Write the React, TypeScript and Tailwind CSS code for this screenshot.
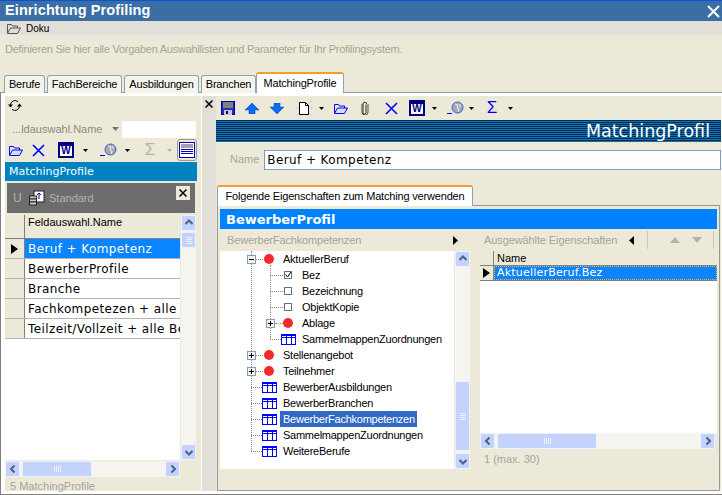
import type { ReactNode } from 'react';

const BLUE = '#0000ff';

function Caret({ className = '', gray = false }: { className?: string; gray?: boolean }) {
  return (
    <svg width="5" height="3" viewBox="0 0 5 3" className={`shrink-0 ${className}`}>
      <path d="M0 0h5L2.5 3z" fill={gray ? '#b5b3a6' : '#000'} />
    </svg>
  );
}

function FolderIcon({ className = '', color = BLUE, fill = '#cfe0ff' }: { className?: string; color?: string; fill?: string }) {
  return (
    <svg width="14" height="11" viewBox="0 0 14 11" className={`shrink-0 ${className}`}>
      <path d="M.5 10V1.5h4l1 1.5h5v2" fill="none" stroke={color} />
      <path d="M.5 10.5l3-5.5h10l-3 5.5z" fill={fill} stroke={color} />
    </svg>
  );
}

function SaveIcon({ className = '' }: { className?: string }) {
  return (
    <svg width="14" height="14" viewBox="0 0 14 14" className={`shrink-0 ${className}`}>
      <rect x="0.5" y="0.5" width="13" height="13" fill="#2a2ac8" stroke="#00009c" />
      <rect x="2" y="1" width="10" height="6" fill="#808080" />
      <rect x="3" y="9" width="8" height="5" fill="#c8c8c8" />
      <rect x="5" y="10" width="2" height="3" fill="#00009c" />
    </svg>
  );
}

function ArrowIcon({ down = false, className = '' }: { down?: boolean; className?: string }) {
  return (
    <svg width="14" height="11" viewBox="0 0 14 11" className={`shrink-0 ${className}`}>
      <path d={down ? 'M4 0h6v4h4L7 11 0 4h4z' : 'M7 0l7 7h-4v4H4V7H0z'} fill="#0a6cf0" stroke="#0040c0" strokeWidth="0.5" />
    </svg>
  );
}

function NewIcon({ className = '' }: { className?: string }) {
  return (
    <svg width="16" height="16" viewBox="0 0 16 16" className={`shrink-0 ${className}`}>
      <path d="M1 1l3 3M15 1l-3 3M1 15l3-3M15 15l-3-3M0 8h2M14 8h2" stroke="#b8c8f0" strokeWidth="1" />
      <path d="M3.5 2.5h6l3 3v9h-9z" fill="#fff" stroke="#000" />
      <path d="M9.5 2.5v3h3" fill="none" stroke="#000" />
    </svg>
  );
}

function ClipIcon({ className = '' }: { className?: string }) {
  return (
    <svg width="8" height="14" viewBox="0 0 8 14" className={`shrink-0 ${className}`}>
      <path d="M5.5 3v8a1.5 1.5 0 0 1-3 0V2.5a1.8 1.8 0 0 1 3.6 0" fill="none" stroke="#303030" transform="translate(-.5 .5)" />
      <path d="M1 3v8a3 3 0 0 0 6 0V3" fill="none" stroke="#505050" />
    </svg>
  );
}

function CrossIcon({ className = '' }: { className?: string }) {
  return (
    <svg width="13" height="13" viewBox="0 0 13 13" className={`shrink-0 ${className}`}>
      <path d="M1 1l11 11M12 1L1 12" stroke={BLUE} strokeWidth="1.6" />
    </svg>
  );
}

function WordIcon({ className = '' }: { className?: string }) {
  return (
    <div className={`flex h-4 w-4 shrink-0 items-end justify-center border-2 border-t-[4px] border-[#000080] bg-white text-[10px] leading-[10px] font-bold text-[#000080] ${className}`}>
      W
    </div>
  );
}

function GlobeIcon({ className = '' }: { className?: string }) {
  return (
    <svg width="17" height="14" viewBox="0 0 17 14" className={`shrink-0 ${className}`}>
      <path d="M0 12.5h5" stroke={BLUE} />
      <circle cx="10.5" cy="6.5" r="5.5" fill="#a8a8b0" stroke="#3060e0" />
      <path d="M8 3l3 1-1 3 2 1-1 3M13 3v3" stroke="#f0f0f0" fill="none" />
    </svg>
  );
}

function SigmaIcon({ className = '', gray = false }: { className?: string; gray?: boolean }) {
  return (
    <span className={`w-3 shrink-0 text-center text-[17px] leading-4 ${gray ? 'text-[#b5b3a6]' : 'text-[#0000ff]'} ${className}`}>
      Σ
    </span>
  );
}

function SyncIcon() {
  return (
    <svg width="14" height="13" viewBox="0 0 14 13">
      <path d="M2.5 6a4.5 4.5 0 0 1 7.5-3.3M11.5 7a4.5 4.5 0 0 1-7.5 3.3" fill="none" stroke="#000" />
      <path d="M0 5.5h5L2.5 8.5zM9 7.5h5l-2.5-3z" fill="#000" />
    </svg>
  );
}

function TableIcon({ className = '' }: { className?: string }) {
  return (
    <svg width="15" height="11" viewBox="0 0 15 11" className={`shrink-0 ${className}`}>
      <rect x="0.5" y="0.5" width="14" height="10" fill="#fff" stroke={BLUE} />
      <path d="M0 3.5h15M5.5 1v10M10.5 1v10" stroke={BLUE} />
      <path d="M1 1.5h13" stroke={BLUE} />
    </svg>
  );
}

function RedDot({ className = '' }: { className?: string }) {
  return <span className={`h-[10px] w-[10px] shrink-0 rounded-full bg-[#f02a2a] ${className}`} />;
}

function Expander({ open = false, className = '' }: { open?: boolean; className?: string }) {
  return (
    <span className={`relative h-[9px] w-[9px] shrink-0 border border-[#7f9db9] bg-[#f4f3ee] ${className}`}>
      <span className="absolute top-[3px] left-[1px] h-px w-[5px] bg-black" />
      {!open && <span className="absolute top-[1px] left-[3px] h-[5px] w-px bg-black" />}
    </span>
  );
}

function Dash({ w }: { w: string }) {
  return <span className={`shrink-0 border-t border-dotted border-[#8c8c78] ${w}`} />;
}

function Check({ checked = false }: { checked?: boolean }) {
  return (
    <span className="relative ml-px flex h-2 w-2 shrink-0 items-center justify-center border border-[#707070] bg-white">
      {checked && (
        <svg width="8" height="8" viewBox="0 0 8 8" className="absolute top-[-1px] left-[-1px]">
          <path d="M1.5 3.5l2 2.5 3.5-5" fill="none" stroke="#000" />
        </svg>
      )}
    </span>
  );
}

function Chevron({ dir }: { dir: 'up' | 'down' | 'left' | 'right' }) {
  const d = {
    up: 'M1.5 6L5 2.5 8.5 6',
    down: 'M1.5 4L5 7.5 8.5 4',
    left: 'M6.5 1.5L3 5l3.5 3.5',
    right: 'M3.5 1.5L7 5l-3.5 3.5',
  }[dir];
  return (
    <svg width="10" height="10" viewBox="0 0 10 10">
      <path d={d} fill="none" stroke="#4d6185" strokeWidth="2" />
    </svg>
  );
}

function SbButton({ dir }: { dir: 'up' | 'down' | 'left' | 'right' }) {
  return (
    <div className="flex h-4 w-[15px] shrink-0 items-center justify-center rounded-[2px] border border-[#eef2ff] bg-[#c3d3fd]">
      <Chevron dir={dir} />
    </div>
  );
}

function VScroll({ thumb, className = '' }: { thumb: ReactNode; className?: string }) {
  return (
    <div className={`flex w-[15px] shrink-0 flex-col bg-[#f5f4ef] ${className}`}>
      <SbButton dir="up" />
      {thumb}
      <SbButton dir="down" />
    </div>
  );
}

function Grip({ vertical = false }: { vertical?: boolean }) {
  return vertical ? (
    <div className="flex flex-col gap-px">
      {[0, 1, 2, 3].map((i) => (
        <span key={i} className="h-px w-[6px] bg-[#eef2ff]" />
      ))}
    </div>
  ) : (
    <div className="flex gap-px">
      {[0, 1, 2, 3].map((i) => (
        <span key={i} className="h-[6px] w-px bg-[#eef2ff]" />
      ))}
    </div>
  );
}

function HScroll({ thumbW, width }: { thumbW: string; width: string }) {
  return (
    <div className={`flex h-4 shrink-0 items-center bg-[#f5f4ef] ${width}`}>
      <SbButton dir="left" />
      <div className={`ml-[2px] flex h-4 items-center justify-center rounded-[2px] border border-[#eef2ff] bg-[#c3d3fd] ${thumbW}`}>
        <Grip />
      </div>
      <div className="flex-1" />
      <SbButton dir="right" />
    </div>
  );
}

function TopTab({ label, w }: { label: string; w: string }) {
  return (
    <div className={`mt-[3px] flex h-[18px] items-center justify-center rounded-t-[3px] border border-b-0 border-[#8ba3b5] bg-[#f5f4ea] text-[11px] tracking-[-0.2px] whitespace-nowrap text-black ${w}`}>
      {label}
    </div>
  );
}

const rows = ['Beruf + Kompetenz', 'BewerberProfile', 'Branche', 'Fachkompetezen + alle Berufe', 'Teilzeit/Vollzeit + alle Berufe'];

function TreeRow({ children, pl }: { children: ReactNode; pl: string }) {
  return <div className={`flex h-4 items-center ${pl}`}>{children}</div>;
}

function TreeLabel({ children, selected = false, ml }: { children: ReactNode; selected?: boolean; ml: string }) {
  return (
    <span className={`pr-[2px] pl-[3px] text-[11px] leading-4 tracking-[-0.25px] whitespace-nowrap ${ml} ${selected ? 'bg-[#316ac5] text-white' : 'text-black'}`}>
      {children}
    </span>
  );
}

export default function App() {
  return (
    <div className="flex h-[495px] w-[722px] flex-col overflow-hidden bg-[#ece9d8] font-['Liberation_Sans',sans-serif]">
      <div className="h-px shrink-0 bg-[#0a50d8]" />
      <div className="flex h-[20px] shrink-0 items-center justify-between bg-[#3a6ea5] pr-[2px] pl-[5px]">
        <span className="text-[14.5px] font-bold tracking-[0.1px] text-white">Einrichtung Profiling</span>
        <svg width="13" height="13" viewBox="0 0 13 13">
          <path d="M1 1l11 11M12 1L1 12" stroke="#fff" strokeWidth="2" />
        </svg>
      </div>
      <div className="flex h-[14px] shrink-0 items-center bg-[#e2dfd8] pl-[7px]">
        <FolderIcon color="#555" fill="#e2dfd8" />
        <span className="ml-[5px] text-[10px] text-black">Doku</span>
      </div>
      <div className="h-[37px] shrink-0 pt-[8px] pl-[5px] text-[11px] leading-[12px] tracking-[-0.25px] text-[#a6a498]">
        Definieren Sie hier alle Vorgaben Auswahllisten und Parameter für Ihr Profilingsystem.
      </div>

      <div className="flex h-[21px] shrink-0 gap-[2px] border-b border-[#919b9c] pl-[4px]">
        <TopTab label="Berufe" w="w-[41px]" />
        <TopTab label="FachBereiche" w="w-[75px]" />
        <TopTab label="Ausbildungen" w="w-[75px]" />
        <TopTab label="Branchen" w="w-[55px]" />
        <div className="z-10 -ml-[2px] flex h-[21px] w-[88px] items-center justify-center rounded-t-[3px] border border-t-2 border-b-0 border-[#8ba3b5] border-t-[#f0a030] bg-white text-[11px] tracking-[-0.2px] text-black">
          MatchingProfile
        </div>
      </div>

      <div className="flex min-h-0 flex-1 border-b border-l border-[#808080] bg-white pt-[3px] pb-[3px] pl-[4px]">
        {/* linke Liste */}
        <div className="flex w-[196px] shrink-0 flex-col bg-[#ece9d8]">
          <div className="flex h-[24px] shrink-0 items-start pt-[3px] pl-[3px]">
            <SyncIcon />
          </div>
          <div className="flex h-[18px] shrink-0 items-center">
            <span className="ml-[7px] w-[96px] text-[11px] whitespace-nowrap text-[#8c8a7e]">...ldauswahl.Name</span>
            <svg width="7" height="4" viewBox="0 0 7 4" className="ml-[4px]">
              <path d="M0 0h7L3.5 4z" fill="#77756a" />
            </svg>
            <div className="ml-[3px] h-[17px] w-[74px] bg-white" />
          </div>
          <div className="flex h-[24px] shrink-0 items-center">
            <FolderIcon className="ml-[4px]" />
            <CrossIcon className="ml-[9px]" />
            <WordIcon className="ml-[13px]" />
            <Caret className="ml-[9px]" />
            <GlobeIcon className="ml-[12px]" />
            <Caret className="ml-[8px]" />
            <SigmaIcon gray className="ml-[14px]" />
            <Caret gray className="ml-[11px]" />
            <div className="ml-[5px] flex h-[22px] w-[20px] items-center justify-center rounded-[3px] border border-[#9c9a8e]">
              <div className="h-[16px] w-[16px] border border-[#0000c0] bg-white">
                <div className="mx-px mt-px h-[4px] bg-[#a0a0b0]" />
                <div className="mx-px mt-px h-px bg-[#0000c0]" />
                <div className="mx-px mt-px h-px bg-[#0000c0]" />
                <div className="mx-px mt-px h-px bg-[#0000c0]" />
              </div>
            </div>
          </div>
          <div className="flex h-[19px] w-[192px] shrink-0 items-center bg-[#0082c0] pt-[1px] pl-[4px] font-['DejaVu_Sans',sans-serif] text-[11px] text-white">
            MatchingProfile
          </div>
          <div className="mt-[2px] ml-[2px] flex h-[30px] w-[188px] shrink-0 items-center bg-[#6d6d6d] pl-[6px] text-[#b4b4ac]">
            <span className="w-[10px] shrink-0 text-[12px]">U</span>
            <svg width="16" height="16" viewBox="0 0 16 16" className="ml-[6px] shrink-0">
              <rect x="5" y="1" width="10" height="11" fill="#fff" stroke="#222" />
              <path d="M10 3v6M8 5l2-2 2 2" stroke="#0000c0" fill="none" />
              <rect x="0.5" y="6" width="7" height="3" fill="#ccc" stroke="#222" />
              <rect x="0.5" y="9" width="7" height="3" fill="#ccc" stroke="#222" />
              <rect x="0.5" y="12" width="7" height="3" fill="#ccc" stroke="#222" />
            </svg>
            <span className="ml-[4px] text-[11px]">Standard</span>
            <div className="mt-[3px] mr-[5px] ml-auto flex h-[14px] w-[14px] shrink-0 items-center justify-center self-start bg-[#ece9d8]">
              <svg width="8" height="8" viewBox="0 0 8 8">
                <path d="M0.5 0.5l7 7M7.5 0.5l-7 7" stroke="#000" strokeWidth="1.5" />
              </svg>
            </div>
          </div>

          <div className="mt-[2px] flex h-[245px] shrink-0">
            <div className="flex w-[175px] shrink-0 flex-col overflow-hidden bg-white">
              <div className="flex h-[24px] shrink-0 border-b border-[#808080] bg-[#ece9d8]">
                <div className="w-[20px] shrink-0 border-r border-[#808080]" />
                <span className="pl-[3px] text-[11px] leading-[14px] text-black">Feldauswahl.Name</span>
              </div>
              {rows.map((row, i) => (
                <div key={row} className="flex h-[20px] shrink-0 border-b border-[#b4b4b4]">
                  <div className="flex w-[20px] shrink-0 items-center justify-center border-r border-[#808080] bg-[#ece9d8]">
                    {i === 0 && (
                      <svg width="7" height="10" viewBox="0 0 7 10">
                        <path d="M0 0l7 5-7 5z" fill="#000" />
                      </svg>
                    )}
                  </div>
                  <div className={`flex-1 overflow-hidden pl-[3px] font-['DejaVu_Sans',sans-serif] text-[12px] leading-[20px] tracking-[0.4px] whitespace-nowrap ${i === 0 ? 'bg-[#0a84ff] text-white' : 'text-black'}`}>
                    {row}
                  </div>
                </div>
              ))}
            </div>
            <VScroll
              className="ml-px"
              thumb={
                <>
                  <div className="mt-px flex h-4 shrink-0 items-center justify-center rounded-[2px] border border-[#eef2ff] bg-[#c3d3fd]">
                    <Grip vertical />
                  </div>
                  <div className="flex-1" />
                </>
              }
            />
          </div>
          <div className="mt-px">
            <HScroll width="w-[175px]" thumbW="w-[70px]" />
          </div>
          <div className="pt-[2px] pl-[5px] text-[11px] leading-[14px] text-[#a6a498]">5 MatchingProfile</div>
        </div>

        {/* Trennleiste */}
        <div className="w-[15px] shrink-0 bg-white pl-px">
          <div className="flex h-full justify-center bg-[#e2dfd8] pt-[4px]">
            <svg width="8" height="8" viewBox="0 0 8 8">
              <path d="M0.5 0.5l7 7M7.5 0.5l-7 7" stroke="#000" strokeWidth="1.5" />
            </svg>
          </div>
        </div>

        {/* rechter Bereich */}
        <div className="flex w-[505px] shrink-0 flex-col bg-[#ece9d8]">
          <div className="flex h-[24px] shrink-0 items-center">
            <SaveIcon className="ml-[5px]" />
            <ArrowIcon className="ml-[10px]" />
            <ArrowIcon down className="ml-[11px]" />
            <NewIcon className="ml-[12px]" />
            <Caret className="ml-[7px]" />
            <FolderIcon className="ml-[10px]" />
            <ClipIcon className="ml-[13px]" />
            <CrossIcon className="ml-[16px]" />
            <WordIcon className="ml-[11px]" />
            <Caret className="ml-[7px]" />
            <GlobeIcon className="ml-[10px]" />
            <Caret className="ml-[5px]" />
            <SigmaIcon className="ml-[12px]" />
            <Caret className="ml-[10px]" />
          </div>
          <div className="flex h-[22px] shrink-0 items-center justify-end bg-[repeating-linear-gradient(180deg,#12264f_0px,#12264f_1px,#0078b4_1px,#0078b4_2px)] pr-[11px] font-['DejaVu_Sans',sans-serif] text-[17.5px] text-white">
            MatchingProfil
          </div>
          <div className="flex h-[43px] shrink-0 items-start pt-[8px]">
            <span className="ml-[14px] text-[11px] leading-[18px] text-[#a6a498]">Name</span>
            <div className="ml-[5px] flex h-[20px] flex-1 items-center border border-[#7f9db9] bg-white pl-[2px] font-['DejaVu_Sans',sans-serif] text-[12px] tracking-[0.4px] text-black">
              Beruf + Kompetenz
            </div>
          </div>

          <div className="relative z-10 -mb-px ml-px flex h-[21px] w-[256px] shrink-0 items-center justify-center rounded-t-[3px] border border-t-2 border-b-0 border-[#8ba3b5] border-t-[#f0a030] bg-white text-[11px] tracking-[-0.18px] whitespace-nowrap text-black">
            Folgende Eigenschaften zum Matching verwenden
          </div>
          <div className="ml-px flex h-[286px] w-[503px] shrink-0 flex-col border border-[#919b9c] bg-[#ece9d8] pt-[3px] pr-[2px] pl-[2px]">
            <div className="flex h-[20px] shrink-0 items-center bg-[#0082ff] pt-[1px] pl-[6px] font-['DejaVu_Sans',sans-serif] text-[13px] font-bold text-white">
              BewerberProfil
            </div>
            <div className="flex min-h-0 flex-1">
              {/* Baum */}
              <div className="flex w-[250px] shrink-0 flex-col">
                <div className="flex h-[22px] shrink-0 items-center justify-between pr-[12px] pl-[7px] text-[11px] tracking-[-0.15px] text-[#a6a498]">
                  <span>BewerberFachkompetenzen</span>
                  <svg width="5" height="9" viewBox="0 0 5 9">
                    <path d="M0 0l5 4.5L0 9z" fill="#000" />
                  </svg>
                </div>
                <div className="flex h-[218px] shrink-0">
                  <div className="relative w-[234px] shrink-0 bg-white">
                    <span className="absolute top-0 left-[31px] h-[200px] border-l border-dotted border-[#8c8c78]" />
                    <span className="absolute top-[14px] left-[50px] h-[74px] border-l border-dotted border-[#8c8c78]" />
                    <div className="relative">
                      <TreeRow pl="pl-[27px]">
                        <Expander open />
                        <Dash w="w-[7px]" />
                        <RedDot className="ml-px" />
                        <TreeLabel ml="ml-[6px]">AktuellerBeruf</TreeLabel>
                      </TreeRow>
                      <TreeRow pl="pl-[50px]">
                        <Dash w="w-[13px]" />
                        <Check checked />
                        <TreeLabel ml="ml-[7px]">Bez</TreeLabel>
                      </TreeRow>
                      <TreeRow pl="pl-[50px]">
                        <Dash w="w-[13px]" />
                        <Check />
                        <TreeLabel ml="ml-[7px]">Bezeichnung</TreeLabel>
                      </TreeRow>
                      <TreeRow pl="pl-[50px]">
                        <Dash w="w-[13px]" />
                        <Check />
                        <TreeLabel ml="ml-[7px]">ObjektKopie</TreeLabel>
                      </TreeRow>
                      <TreeRow pl="pl-[46px]">
                        <Expander />
                        <Dash w="w-[8px]" />
                        <RedDot />
                        <TreeLabel ml="ml-[6px]">Ablage</TreeLabel>
                      </TreeRow>
                      <TreeRow pl="pl-[50px]">
                        <Dash w="w-[11px]" />
                        <TableIcon />
                        <TreeLabel ml="ml-[3px]">SammelmappenZuordnungen</TreeLabel>
                      </TreeRow>
                      <TreeRow pl="pl-[27px]">
                        <Expander />
                        <Dash w="w-[7px]" />
                        <RedDot className="ml-px" />
                        <TreeLabel ml="ml-[6px]">Stellenangebot</TreeLabel>
                      </TreeRow>
                      <TreeRow pl="pl-[27px]">
                        <Expander />
                        <Dash w="w-[7px]" />
                        <RedDot className="ml-px" />
                        <TreeLabel ml="ml-[6px]">Teilnehmer</TreeLabel>
                      </TreeRow>
                      {['BewerberAusbildungen', 'BewerberBranchen', 'BewerberFachkompetenzen', 'SammelmappenZuordnungen', 'WeitereBerufe'].map((name) => (
                        <TreeRow key={name} pl="pl-[31px]">
                          <Dash w="w-[11px]" />
                          <TableIcon />
                          <TreeLabel ml="ml-[3px]" selected={name === 'BewerberFachkompetenzen'}>
                            {name}
                          </TreeLabel>
                        </TreeRow>
                      ))}
                    </div>
                  </div>
                  <VScroll
                    className="ml-px"
                    thumb={
                      <>
                        <div className="flex-1" />
                        <div className="mb-[2px] flex h-[70px] shrink-0 items-center justify-center rounded-[2px] border border-[#eef2ff] bg-[#c3d3fd]">
                          <Grip vertical />
                        </div>
                      </>
                    }
                  />
                </div>
              </div>

              {/* Auswahl */}
              <div className="ml-[10px] flex w-[237px] shrink-0 flex-col">
                <div className="flex h-[22px] shrink-0 items-center text-[11px] tracking-[-0.1px] text-[#a6a498]">
                  <span className="ml-[4px] w-[145px] whitespace-nowrap">Ausgewählte Eigenschaften</span>
                  <svg width="5" height="9" viewBox="0 0 5 9">
                    <path d="M5 0L0 4.5 5 9z" fill="#000" />
                  </svg>
                  <span className="ml-[13px] h-[18px] border-l border-[#c8c6b8]" />
                  <svg width="10" height="6" viewBox="0 0 10 6" className="ml-[22px]">
                    <path d="M0 6l5-6 5 6z" fill="#b5b3a6" />
                  </svg>
                  <svg width="10" height="6" viewBox="0 0 10 6" className="ml-[12px]">
                    <path d="M0 0l5 6 5-6z" fill="#b5b3a6" />
                  </svg>
                  <span className="ml-[11px] h-[18px] border-l border-[#c8c6b8]" />
                </div>
                <div className="flex h-[182px] shrink-0 flex-col bg-white">
                  <div className="flex h-[14px] shrink-0 bg-[#ece9d8]">
                    <div className="w-[14px] shrink-0 border-r border-[#808080]" />
                    <span className="pl-[3px] text-[11px] leading-[14px] text-black">Name</span>
                  </div>
                  <div className="flex h-[16px] shrink-0 border-y border-[#808080]">
                    <div className="flex w-[14px] shrink-0 items-center justify-center border-r border-[#808080] bg-[#ece9d8]">
                      <svg width="7" height="10" viewBox="0 0 7 10">
                        <path d="M0 0l7 5-7 5z" fill="#000" />
                      </svg>
                    </div>
                    <div className="flex-1 border border-dotted border-[#ffb040] bg-[#0a84ff] pl-[2px] font-['DejaVu_Sans',sans-serif] text-[11px] leading-[12px] tracking-[0.2px] text-white">
                      AktuellerBeruf.Bez
                    </div>
                  </div>
                </div>
                <HScroll width="w-[235px]" thumbW="w-[100px]" />
                <div className="pt-[3px] pl-[4px] text-[11px] leading-[14px] text-[#a6a498]">1 (max. 30)</div>
              </div>
            </div>
          </div>
        </div>
      </div>
    </div>
  );
}
